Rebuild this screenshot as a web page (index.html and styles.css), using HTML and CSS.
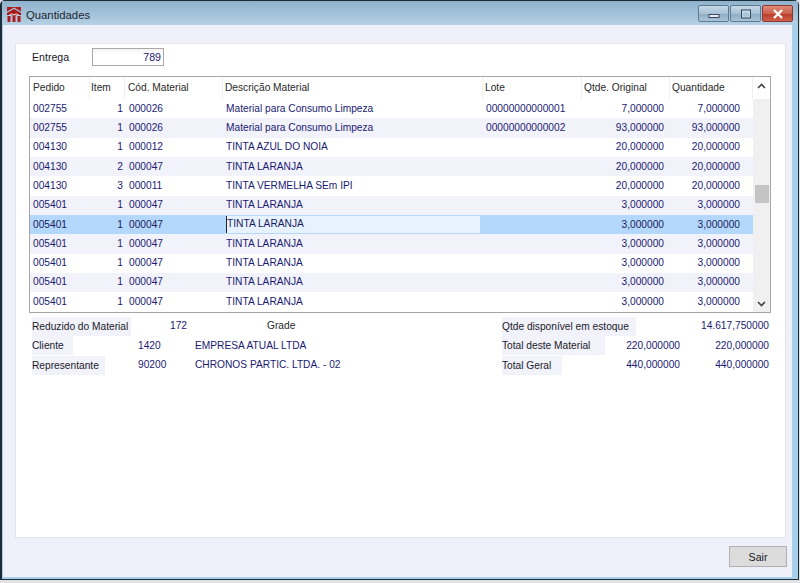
FILE: index.html
```html
<!DOCTYPE html>
<html lang="pt">
<head>
<meta charset="utf-8">
<title>Quantidades</title>
<link rel="stylesheet" href="styles.css">
</head>
<body>
<div class="window">
  <header class="titlebar">
    <svg class="appicon" width="14" height="16" viewBox="0 0 14 16"><path d="M0 1h14v4.500L7 1.500 0 5.500z" fill="#b01c1c"/><path d="M0 7l7-4 7 4v2H0z" fill="#a81818"/><path d="M0.500 10h3v6h-3zM5.500 9h3v7h-3zM10.500 10h3v6h-3z" fill="#b01c1c"/><path d="M2 9.500c2-2 3-2 5-.5 2-1.500 3-1.500 5 .5" stroke="#fff" stroke-width="1" fill="none"/></svg>
    <span class="title">Quantidades</span>
    <div class="controls">
      <span class="ctl"><svg width="12" height="8" viewBox="0 0 12 8"><rect x="1" y="4.500" width="10" height="3" fill="#e8eef4" stroke="#33465c"/></svg></span>
      <span class="ctl"><svg width="12" height="10" viewBox="0 0 12 10"><rect x="1.500" y="1" width="9" height="8" fill="#c9dbe8" stroke="#33465c" stroke-width="1"/><rect x="3" y="3.500" width="6" height="4" fill="#a9c4d8"/></svg></span>
      <span class="ctl close"><svg width="14" height="10" viewBox="0 0 14 10"><path d="M3 1l8 8M11 1l-8 8" stroke="#fff" stroke-width="2.400"/></svg></span>
    </div>
  </header>
  <div class="client">
    <main class="panel">
      <div class="entrega">
        <span class="entrega-label">Entrega</span>
        <span class="entrega-input">789</span>
      </div>
      <section class="grid">
        <div class="grid-body">
          <div class="row head">
            <span>Pedido</span><span>Item</span><span>Cód. Material</span><span>Descrição Material</span><span>Lote</span><span>Qtde. Original</span><span>Quantidade</span>
          </div>
          <div class="row"><span>002755</span><span class="r">1</span><span>000026</span><span>Material para Consumo Limpeza</span><span>00000000000001</span><span class="r">7,000000</span><span class="r">7,000000</span></div>
          <div class="row alt"><span>002755</span><span class="r">1</span><span>000026</span><span>Material para Consumo Limpeza</span><span>00000000000002</span><span class="r">93,000000</span><span class="r">93,000000</span></div>
          <div class="row"><span>004130</span><span class="r">1</span><span>000012</span><span>TINTA AZUL DO NOIA</span><span></span><span class="r">20,000000</span><span class="r">20,000000</span></div>
          <div class="row alt"><span>004130</span><span class="r">2</span><span>000047</span><span>TINTA LARANJA</span><span></span><span class="r">20,000000</span><span class="r">20,000000</span></div>
          <div class="row"><span>004130</span><span class="r">3</span><span>000011</span><span>TINTA VERMELHA SEm IPI</span><span></span><span class="r">20,000000</span><span class="r">20,000000</span></div>
          <div class="row alt"><span>005401</span><span class="r">1</span><span>000047</span><span>TINTA LARANJA</span><span></span><span class="r">3,000000</span><span class="r">3,000000</span></div>
          <div class="row sel"><span>005401</span><span class="r">1</span><span>000047</span><span class="editor">TINTA LARANJA</span><span></span><span class="r">3,000000</span><span class="r">3,000000</span></div>
          <div class="row alt"><span>005401</span><span class="r">1</span><span>000047</span><span>TINTA LARANJA</span><span></span><span class="r">3,000000</span><span class="r">3,000000</span></div>
          <div class="row"><span>005401</span><span class="r">1</span><span>000047</span><span>TINTA LARANJA</span><span></span><span class="r">3,000000</span><span class="r">3,000000</span></div>
          <div class="row alt"><span>005401</span><span class="r">1</span><span>000047</span><span>TINTA LARANJA</span><span></span><span class="r">3,000000</span><span class="r">3,000000</span></div>
          <div class="row"><span>005401</span><span class="r">1</span><span>000047</span><span>TINTA LARANJA</span><span></span><span class="r">3,000000</span><span class="r">3,000000</span></div>
        </div>
        <div class="scrollbar">
          <svg class="arrow" width="9" height="6" viewBox="0 0 9 6"><path d="M1 5l3.500-3.500L8 5" fill="none" stroke="#444" stroke-width="1.600"/></svg>
          <div class="thumb"></div>
          <svg class="arrow" width="9" height="6" viewBox="0 0 9 6"><path d="M1 1l3.500 3.500L8 1" fill="none" stroke="#444" stroke-width="1.600"/></svg>
        </div>
      </section>
      <section class="info">
        <div class="info-left">
          <span class="lbl w-red">Reduzido do Material</span><span class="val v-red">172</span><span class="plain">Grade</span>
          <span class="lbl w-cli">Cliente</span><span class="val">1420</span><span class="val">EMPRESA ATUAL LTDA</span>
          <span class="lbl w-rep">Representante</span><span class="val">90200</span><span class="val">CHRONOS PARTIC. LTDA. - 02</span>
        </div>
        <div class="info-right">
          <span class="lbl w-q">Qtde disponível em estoque</span><span class="val num span-2">14.617,750000</span>
          <span class="lbl w-t">Total deste Material</span><span class="val num">220,000000</span><span class="val num">220,000000</span>
          <span class="lbl w-g">Total Geral</span><span class="val num">440,000000</span><span class="val num">440,000000</span>
        </div>
      </section>
    </main>
    <footer class="footer"><button class="btn" type="button">Sair</button></footer>
  </div>
</div>
</body>
</html>
```
FILE: styles.css
```css
* { box-sizing: border-box; }
html, body { margin: 0; height: 100%; }
body { font: 10.2px/14px "Liberation Sans", Arial, sans-serif; color: #1a1a2a; background: #dfe3e6; overflow: hidden; }
.window {
  width: 799px; height: 580px; display: flex; flex-direction: column;
  background: #a9d0ea;
  border: 1px solid #1e2c38;
  border-left-width: 2px;
  border-radius: 5px 5px 0 0;
}
.titlebar {
  height: 24px; flex: none; display: flex; align-items: flex-start; padding: 5px 5px 0 5px;
  background: linear-gradient(#8fb2cc, #b4d0e4);
}
.appicon { flex: none; }
.title { margin-left: 5px; margin-top: 2px; font-size: 11.3px; color: #1c2630; }
.controls { margin-left: auto; display: flex; gap: 1px; margin-top: -1px; }
.ctl {
  width: 31px; height: 17px; display: flex; align-items: center; justify-content: center;
  border: 1px solid #5f7a90; border-radius: 2px;
  background: linear-gradient(#c6d8e6 0, #a8c2d6 50%, #8eabc2 51%, #a9c4d8 100%);
}
.close { background: linear-gradient(#e08a78 0, #c9604c 50%, #b83a28 51%, #d0604c 100%); border-color: #8a3a30; }
.client {
  flex: 1; margin: 0 6px 2px 1px; padding: 18px 6px 10px 12px; background: #f0f0fa;
  display: flex; flex-direction: column; min-height: 0;
}
.panel {
  flex: 1; background: #fff; border: 1px solid #e4e4ec; padding: 4px 13px 0 13px; min-height: 0;
}
.entrega { display: flex; align-items: center; height: 18px; padding-left: 3px; }
.entrega-label { width: 60px; font-size: 10.6px; }
.entrega-input {
  width: 72px; height: 18px; border: 1px solid #a8a8a8; text-align: right; padding: 1px 2px 0 0;
  color: #1a1a6e; background: linear-gradient(#f4f4f4, #fff 40%); font-size: 10.6px;
}
.grid {
  margin-top: 10px; width: 742px; height: 237px; border: 1px solid #a6a6a6; display: flex; background: #fff; overflow: hidden;
}
.grid-body { width: 723px; flex: none; }
.row {
  display: grid; grid-template-columns: 60px 35px 98px 260px 99px 88px 83px; height: 19.32px; align-items: center;
  color: #1a1a72; overflow: hidden;
}
.row > span { padding-left: 3px; white-space: nowrap; }
.row > span:nth-child(3) { padding-left: 4px; }
.row > .r { text-align: right; padding-right: 6px; padding-left: 0; }
.row > .r:last-child { padding-right: 13px; }
.row > span:nth-child(2).r { padding-right: 2px; }
.alt { background: #f2f2fa; }
.sel { background: #b4d8fc; color: #1a1a5e; }
.row > .editor { background: #e6f3fe; height: 17px; line-height: 15px; margin-right: 3px; margin-left: 3px; padding-left: 0; border-left: 1px solid #222; }
.head { height: 22px; color: #2a2a2a; background: #fff; }
.head > span { height: 22px; line-height: 21px; border-right: 1px solid #f0f0f0; }
.row.head > span { padding-left: 2px; }
.row.head > span:nth-child(1) { padding-left: 3px; }
.row.head > span:nth-child(2) { padding-left: 1px; }
.row.head > span:nth-child(3) { padding-left: 3px; }
.scrollbar { flex: 1; display: flex; flex-direction: column; align-items: center; padding: 6px 0 5px; background: linear-gradient(#fff 22px, #f0f0f0 22px); }
.arrow { flex: none; }
.thumb { width: 14px; height: 18px; background: #c4c4c4; margin-top: 96px; margin-bottom: auto; }
.info { display: flex; margin-top: 3.5px; height: 60px; }
.info-left {
  width: 473px; padding-left: 3px; display: grid; grid-template-columns: 106px 57px 1fr; grid-template-rows: repeat(3, 19.5px); align-items: center;
}
.info-right {
  width: 267px; display: grid; grid-template-columns: 122px 56px 89px; grid-template-rows: repeat(3, 19.5px); align-items: center;
}
.lbl { background: #f2f2fa; height: 19px; line-height: 19px; white-space: nowrap; justify-self: start; }
.w-q { width: 134px; } .w-t { width: 103px; } .w-g { width: 60px; }
.w-red { width: 99px; } .w-cli { width: 41px; } .w-rep { width: 73px; }
.val { color: #1a1a72; white-space: nowrap; }
.v-red { padding-left: 32px; }
.plain { color: #2a2a2a; padding-left: 72px; }
.num { text-align: right; }
.span-2 { grid-column: 2 / 4; }
.footer { flex: none; height: 29px; display: flex; justify-content: flex-end; align-items: flex-end; }
.btn {
  width: 58px; height: 21px; font: 10.6px "Liberation Sans", Arial, sans-serif; color: #1a1a1a;
  background: #dcdcdc; border: 1px solid #b0b0b0; margin-right: -1px; padding: 0;
}
```
